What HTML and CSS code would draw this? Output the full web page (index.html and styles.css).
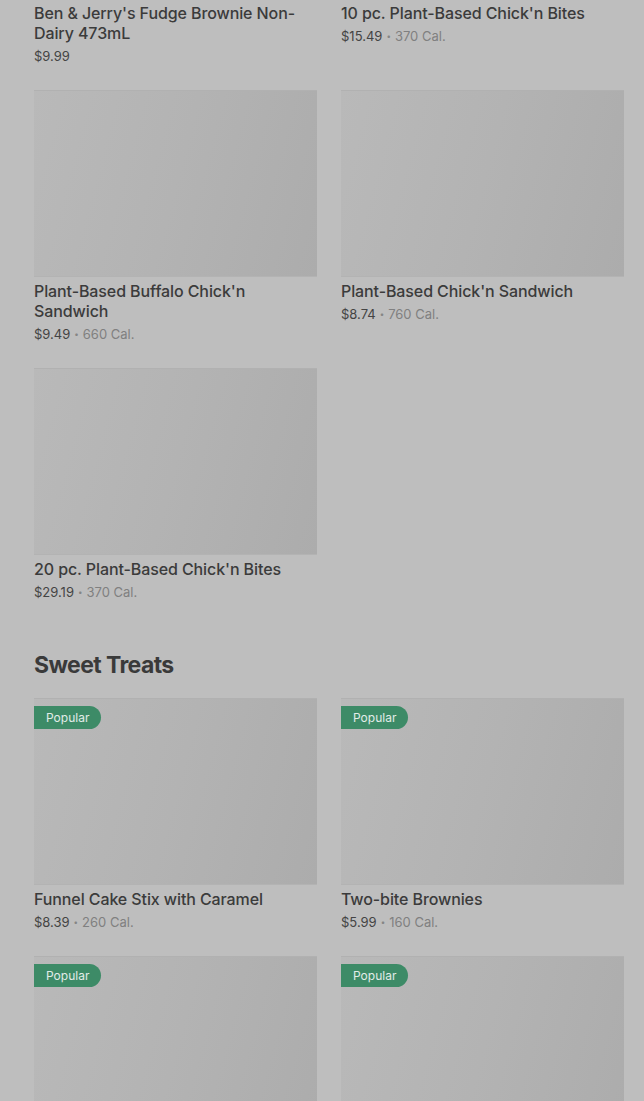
FILE: index.html
```html
<!DOCTYPE html>
<html lang="en">
  <head>
    <meta charset="UTF-8" />
    <meta name="viewport" content="width=device-width, initial-scale=1.0" />
    <title>Menu</title>
    <link rel="stylesheet" href="styles.css">
  </head>
  <body>
    <main class="menu">
      <section class="menu-section">
        <ul class="item-grid">
          <li class="item item-no-image">
            <h3 class="item-name">Ben &amp; Jerry's Fudge Brownie Non-Dairy 473mL</h3>
            <p class="item-meta"><span class="price">$9.99</span></p>
          </li>
          <li class="item item-no-image">
            <h3 class="item-name">10 pc. Plant-Based Chick'n Bites</h3>
            <p class="item-meta"><span class="price">$15.49</span><span class="dot">•</span><span class="cal">370 Cal.</span></p>
          </li>
          <li class="item">
            <div class="item-image"></div>
            <h3 class="item-name">Plant-Based Buffalo Chick'n Sandwich</h3>
            <p class="item-meta"><span class="price">$9.49</span><span class="dot">•</span><span class="cal">660 Cal.</span></p>
          </li>
          <li class="item">
            <div class="item-image"></div>
            <h3 class="item-name">Plant-Based Chick'n Sandwich</h3>
            <p class="item-meta"><span class="price">$8.74</span><span class="dot">•</span><span class="cal">760 Cal.</span></p>
          </li>
          <li class="item">
            <div class="item-image"></div>
            <h3 class="item-name">20 pc. Plant-Based Chick'n Bites</h3>
            <p class="item-meta"><span class="price">$29.19</span><span class="dot">•</span><span class="cal">370 Cal.</span></p>
          </li>
        </ul>
      </section>

      <section class="menu-section">
        <h2 class="section-title">Sweet Treats</h2>
        <ul class="item-grid">
          <li class="item">
            <div class="item-image"><span class="badge">Popular</span></div>
            <h3 class="item-name">Funnel Cake Stix with Caramel</h3>
            <p class="item-meta"><span class="price">$8.39</span><span class="dot">•</span><span class="cal">260 Cal.</span></p>
          </li>
          <li class="item">
            <div class="item-image"><span class="badge">Popular</span></div>
            <h3 class="item-name">Two-bite Brownies</h3>
            <p class="item-meta"><span class="price">$5.99</span><span class="dot">•</span><span class="cal">160 Cal.</span></p>
          </li>
          <li class="item">
            <div class="item-image"><span class="badge">Popular</span></div>
          </li>
          <li class="item">
            <div class="item-image"><span class="badge">Popular</span></div>
          </li>
        </ul>
      </section>
    </main>
  </body>
</html>
```

FILE: styles.css
```css
* {
  margin: 0;
  padding: 0;
  box-sizing: border-box;
}

body {
  font-family: Inter, Roboto, "Liberation Sans", sans-serif;
  background-color: #bebebe;
  color: #3b3b3b;
  overflow: hidden;
}

.menu {
  padding: 3px 20px 0 34px;
}

.menu-section + .menu-section {
  margin-top: 48px;
}

.section-title {
  font-size: 23px;
  line-height: 32px;
  font-weight: 700;
  color: #3a3a3a;
  letter-spacing: -0.6px;
  margin-bottom: 17px;
}

.item-grid {
  list-style: none;
  display: grid;
  grid-template-columns: 283px 283px;
  column-gap: 24px;
  row-gap: 25px;
}

.item {
  display: flex;
  flex-direction: column;
}

.item-image {
  position: relative;
  height: 187px;
  margin-bottom: 4px;
  background: linear-gradient(105deg, #b9b9b9 0%, #b3b3b3 50%, #acacac 100%);
  border-top: 1px solid #b1b1b1;
  border-bottom: 1px solid #b3b3b3;
}

.badge {
  position: absolute;
  top: 7px;
  left: 0;
  height: 23px;
  line-height: 23px;
  padding: 0 12px;
  font-size: 12px;
  color: #e2ece7;
  background-color: #3d8b67;
  border-radius: 0 12px 12px 0;
}

.item-name {
  font-size: 16px;
  line-height: 20px;
  font-weight: 500;
  letter-spacing: -0.1px;
  color: #3b3b3b;
}

.item-meta {
  margin-top: 4px;
  font-size: 13px;
  line-height: 18px;
}

.price {
  color: #444;
}

.dot {
  color: #858585;
  font-size: 8px;
  vertical-align: 2px;
  margin: 0 4px;
}

.cal {
  color: #808080;
}
```
